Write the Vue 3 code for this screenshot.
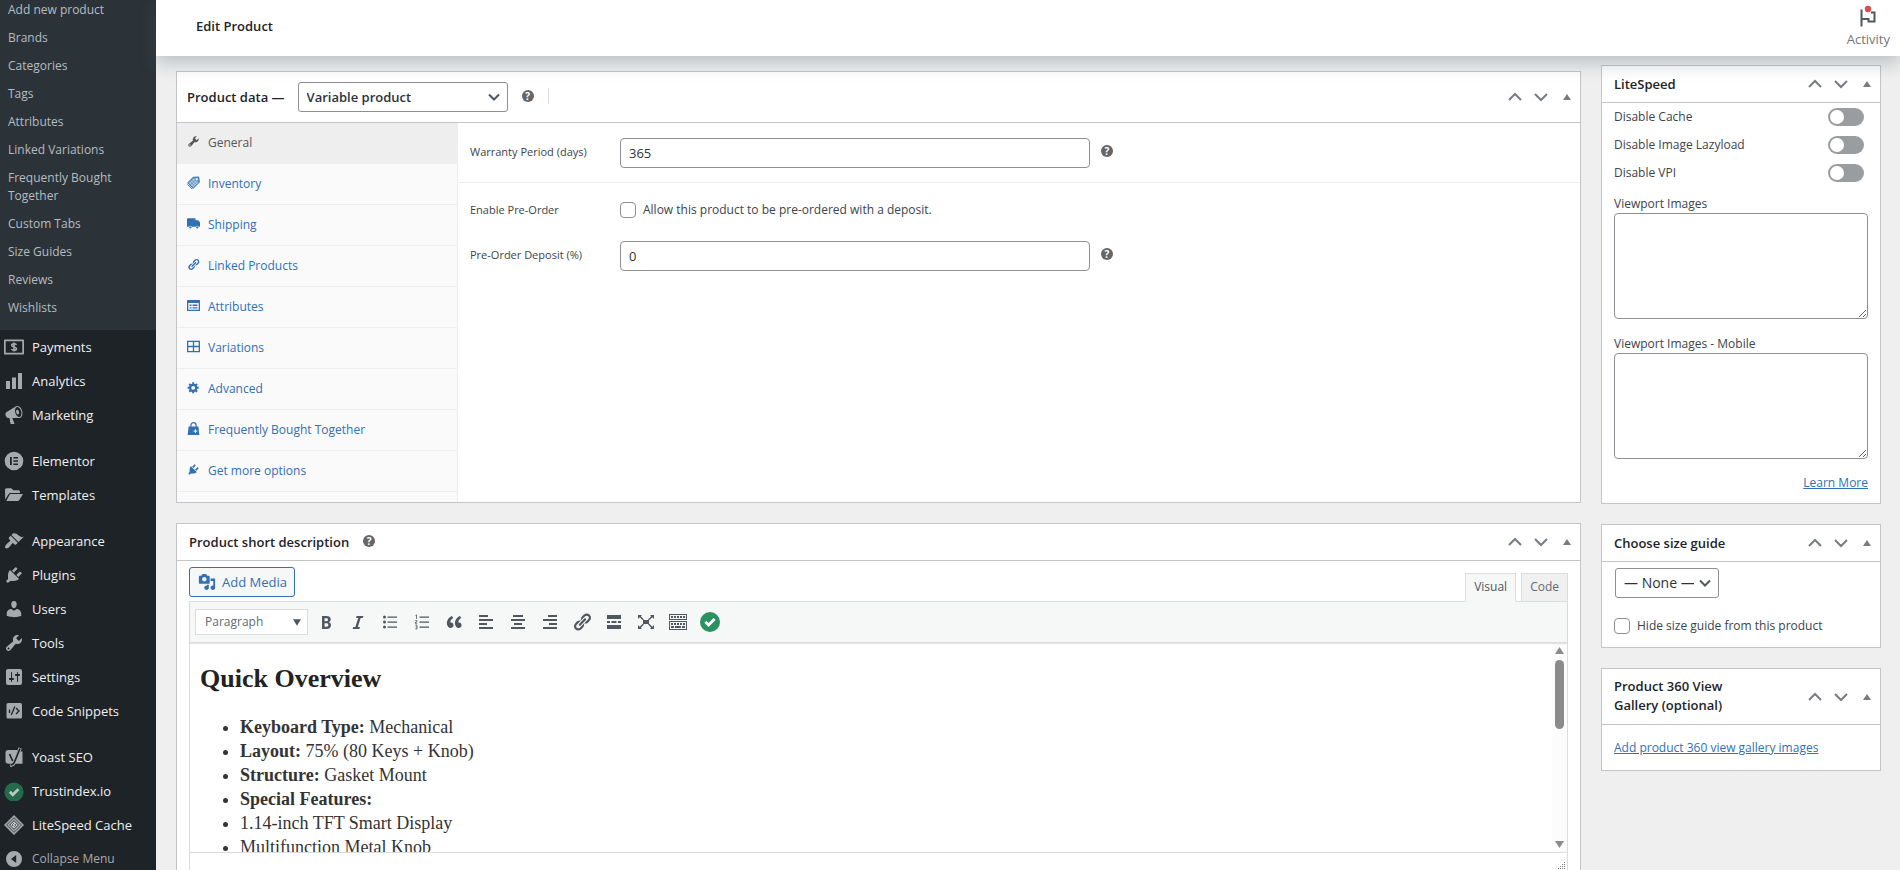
<script setup>
import { ref } from 'vue'

const icons = {
  payments: '<path fill-rule="evenodd" d="M1 2.500h18c.6 0 1 .4 1 1v13c0 .6-.4 1-1 1H1c-.6 0-1-.4-1-1v-13c0-.6.4-1 1-1zm.7 1.700v11.600h16.600V4.200z"/><path d="M12.500 7.800c-.5-.8-1.400-1-2.500-1-1.300 0-2.300.5-2.300 1.500 0 2.200 4.800 1.100 4.800 3.400 0 1-1 1.600-2.400 1.600-1.200 0-2.200-.3-2.700-1.100M10 5.500v9" fill="none" stroke="currentColor" stroke-width="1.600"/>',
  analytics: '<path d="M2 10h4v8H2zM8 6.500h4V18H8zM14 2h4v16h-4z"/>',
  marketing: '<path d="M18.150 5.940c.46 1.620.38 3.220-.02 4.480-.42 1.280-1.260 2.180-2.300 2.480-.16.060-.26.060-.4.060-.06.020-.12.020-.18.020-.06.020-.14.020-.22.020h-6.800l2.220 5.500c.02.140-.06.260-.14.340-.08.100-.24.160-.34.160H6.950c-.1 0-.26-.06-.34-.16-.08-.08-.16-.2-.14-.34l-1-5.500H4.250l-.02-.02c-.5.060-1.080-.18-1.540-.62s-.88-1.080-1.060-1.880c-.24-.8-.2-1.560-.02-2.200.18-.62.580-1.080 1.060-1.300l.02-.02 9-5.400c.1-.06.180-.1.240-.16.060-.04.140-.08.240-.12.160-.08.280-.12.500-.18 1.040-.3 2.240.1 3.220.980s1.840 2.240 2.260 3.860zm-2.580 5.980h-.02c.4-.1.740-.34 1.040-.7.580-.7.860-1.760.860-3.040 0-.64-.1-1.300-.28-1.980-.34-1.360-1.020-2.500-1.780-3.240s-1.680-1.100-2.460-.88c-.82.220-1.400.960-1.700 2-.32 1.040-.28 2.360.060 3.720.38 1.360 1 2.500 1.800 3.240.78.740 1.620 1.100 2.480.880zm-2.540-7.080c.22-.04.420-.02.620.040.380.160.760.480 1.020 1s.42 1.200.42 1.780c0 .3-.04.560-.12.800-.18.480-.44.840-.86.940-.34.100-.8-.06-1.140-.4s-.64-.86-.78-1.500c-.18-.62-.12-1.240.020-1.720s.48-.84.820-.94z"/>',
  elementor: '<path fill-rule="evenodd" d="M10 .7a9.300 9.300 0 1 0 0 18.600A9.300 9.300 0 0 0 10 .7zM6 6h1.800v8H6zm3.400 0H14v1.600H9.400zm0 3.200H14v1.600H9.400zm0 3.200H14V14H9.400z"/>',
  templates: '<path d="M1 5c0-1 .6-1.700 1.500-1.700h4.800l2 2h5.200c.8 0 1.400.6 1.400 1.400V8H6.800c-1 0-1.800.4-2.300 1.300L1.200 14.500z"/><path d="M6.800 9H19l-3.500 5.800c-.5.800-1.300 1.300-2.200 1.300H2.300l3-5.900C5.600 9.400 6.100 9 6.800 9z"/>',
  appearance: '<path d="M14.480 11.060L7.410 3.990l1.500-1.500c.5-.56 2.300-.47 3.510.320 1.210.8 1.430 1.280 2.910 2.100 1.180.640 2.450 1.260 4.450.850zm-.71.710L6.700 4.700 4.930 6.470c-.39.390-.39 1.020 0 1.410l1.060 1.060c.39.390.39 1.030 0 1.420-.6.600-1.430 1.110-2.210 1.690-.35.260-.7.530-1.010.840C1.430 14.230.4 16.080 1.400 17.070c.99 1 2.840-.03 4.180-1.360.31-.31.580-.66.850-1.020.57-.78 1.080-1.610 1.690-2.210.39-.39 1.020-.39 1.410 0l1.060 1.060c.39.390 1.020.39 1.410 0z"/>',
  plugin: '<path d="M13.110 4.360L9.870 7.600 8 5.730l3.240-3.240c.35-.34 1.050-.2 1.560.320.520.510.660 1.210.310 1.550zm-8 1.770l.91-1.120 9.010 9.010-1.190.840c-.71.710-2.630 1.160-3.820 1.160H6.140L4.900 17.260c-.59.590-1.540.590-2.120 0-.59-.58-.59-1.530 0-2.120l1.240-1.240v-3.880c0-1.130.4-3.190 1.090-3.890zm7.260 3.970l3.240-3.240c.34-.35 1.040-.21 1.550.310.520.510.660 1.210.310 1.550l-3.240 3.250z"/>',
  users: '<path d="M10 9.250c-2.270 0-2.730-3.440-2.730-3.440C7 4.020 7.820 2 9.970 2c2.160 0 2.980 2.020 2.710 3.810 0 0-.41 3.440-2.680 3.440zm0 2.570L12.720 10c2.390 0 4.520 2.330 4.520 4.530v2.490s-3.650 1.130-7.240 1.130c-3.650 0-7.240-1.130-7.240-1.130v-2.490c0-2.250 1.940-4.480 4.470-4.480z"/>',
  wrench: '<path d="M16.680 9.770c-1.340 1.340-3.300 1.670-4.950.99l-5.410 6.520c-.99.990-2.590.990-3.580 0s-.99-2.590 0-3.570l6.520-5.420c-.68-1.650-.35-3.610.99-4.950 1.280-1.280 3.120-1.620 4.720-1.060l-2.890 2.890 2.820 2.820 2.860-2.870c.53 1.580.18 3.390-1.080 4.650zM3.810 16.210c.4.390 1.040.390 1.430 0 .4-.4.4-1.040 0-1.430-.39-.4-1.030-.4-1.430 0-.39.390-.39 1.030 0 1.430z"/>',
  settings: '<path d="M18 16V4c0-1.100-.9-2-2-2H4c-1.100 0-2 .9-2 2v12c0 1.100.9 2 2 2h12c1.100 0 2-.9 2-2zM8 11h1c.55 0 1 .45 1 1s-.45 1-1 1H8v1.500c0 .28-.22.5-.5.5s-.5-.22-.5-.5V13H6c-.55 0-1-.45-1-1s.45-1 1-1h1V5.500c0-.28.22-.5.5-.5s.5.22.5.5V11zm5-2h-1c-.55 0-1-.45-1-1s.45-1 1-1h1V5.500c0-.28.22-.5.5-.5s.5.22.5.5V7h1c.55 0 1 .45 1 1s-.45 1-1 1h-1v5.500c0 .28-.22.5-.5.5s-.5-.22-.5-.5V9z"/>',
  snippets: '<rect x="2.500" y="2" width="15.500" height="15.500" rx="1.500"/><path d="M10.800 5.500l-3.500 8.500M5.500 8.500v3.500M12 7l3 3-3 3" fill="none" stroke="#1d2327" stroke-width="1.300"/>',
  yoast: '<path d="M4.500 3h9L9.500 16.800H4.500A3 3 0 0 1 1.500 13.800V6a3 3 0 0 1 3-3z"/><path d="M14.800 4.500L18.500 4.500V16.800H10z"/><path d="M5.500 7l3 7M16.200 1L10.500 15c-.8 2.200-2 3.300-4.500 3.500" fill="none" stroke="#a7aaad" stroke-width="3.400"/><path d="M5.500 7l3.200 7M16 1.500L10.500 15c-.8 1.900-1.800 2.800-4 3" fill="none" stroke="#1d2327" stroke-width="1.700"/>',
  trust: '<circle cx="10" cy="11" r="9.600" fill="#256b4b"/><path d="M5.800 10.700l3 3 5.600-5.400" fill="none" stroke="#b9c9c1" stroke-width="2.800"/>',
  litespeed: '<path d="M10 1l9 9-9 9-9-9z" fill="#64696d" stroke="#a7aaad" stroke-width="1.400"/><path d="M10 4.300l5.700 5.700-5.700 5.700L4.300 10z" fill="none" stroke="#c3c4c7"/><path d="M10 7l3 3-3 3-3-3z" fill="none" stroke="#c3c4c7"/><path d="M11 8l-2 2h2l-2 2" fill="none" stroke="#e4e5e6" stroke-width=".8"/>',
  collapse: '<path fill-rule="evenodd" d="M10 2a8 8 0 1 0 0 16 8 8 0 0 0 0-16zm2.200 4v8l-5.200-4z"/>',
  inventory: '<path d="M9.500 2L18 1.500l1 8L9.500 19 1 10.500z" fill-opacity=".7"/><path d="M1 10.500L9.500 2 18 1.500l1 8L9.500 19zM1 13l7 7" fill="none" stroke="currentColor" stroke-width="1.500"/><circle cx="15" cy="5" r="1.600" fill="#fff"/><path d="M6 7l7 7M3.500 9.500l7 7M8.500 4.500l7 7M12 4l-8 8M15 7l-8 8M17 9l-8 8" stroke="#fafafa" stroke-width=".7"/>',
  shipping: '<path d="M1 2h12v3h4.500L20 8.500V15h-2a2.500 2.500 0 0 0-4.500 0H7.500A2.500 2.500 0 0 0 3 15H0V3a1 1 0 0 1 1-1z"/><circle cx="5.200" cy="16" r="1.700"/><circle cx="15.800" cy="16" r="1.700"/>',
  link: '<path d="M17.740 2.760c1.680 1.690 1.680 4.410 0 6.100l-1.530 1.520c-1.120 1.120-2.700 1.470-4.140 1.090l2.620-2.610.76-.77.760-.76c.84-.84.84-2.200 0-3.040-.84-.85-2.200-.85-3.040 0l-.77.760-3.380 3.380c-.37-1.440-.02-3.020 1.100-4.140l1.520-1.530c1.690-1.680 4.420-1.680 6.100 0zM8.590 13.430l5.340-5.340c.42-.42.420-1.100 0-1.520-.44-.43-1.130-.39-1.530 0l-5.330 5.340c-.42.420-.42 1.100 0 1.520.44.430 1.130.390 1.520 0zm-.76 2.290l4.140-4.150c.38 1.440.030 3.020-1.090 4.140l-1.520 1.530c-1.690 1.680-4.410 1.680-6.100 0-1.680-1.680-1.680-4.420 0-6.100l1.530-1.520c1.120-1.120 2.700-1.470 4.140-1.100l-4.140 4.150c-.85.840-.85 2.200 0 3.050.84.840 2.200.840 3.040 0z"/>',
  attributes: '<path fill-rule="evenodd" d="M1 1.500h18a1 1 0 0 1 1 1v15a1 1 0 0 1-1 1H1a1 1 0 0 1-1-1v-15a1 1 0 0 1 1-1zM2 6v10.500h16V6z"/><path d="M4 8.500h3v2.300H4zM8.500 8.500H16v2.300H8.500zM4 12.500h3v2.300H4zM8.500 12.500H16v2.300H8.500z"/>',
  variations: '<path fill-rule="evenodd" d="M0 1h20v18H0zM2 3v6h7V3zM11 3v6h7V3zM2 11v6h7v-6zM11 11v6h7v-6z"/>',
  gear: '<path d="M18 12h-2.180c-.17.700-.44 1.350-.81 1.930l1.540 1.540-2.100 2.100-1.540-1.540c-.58.360-1.230.630-1.910.790V19H8v-2.180c-.68-.16-1.330-.43-1.910-.79l-1.540 1.540-2.120-2.120 1.540-1.540c-.36-.58-.63-1.230-.79-1.910H1V9.030h2.170c.16-.7.440-1.350.8-1.940L2.430 5.550l2.100-2.100 1.540 1.540c.58-.37 1.240-.64 1.930-.81V2h3v2.180c.68.160 1.330.430 1.910.790l1.540-1.540 2.120 2.120-1.540 1.540c.36.590.640 1.240.8 1.940H18V12zm-8.500 1.500c1.660 0 3-1.340 3-3s-1.340-3-3-3-3 1.340-3 3 1.340 3 3 3z"/>',
  bag: '<path d="M2.500 7h15L19 20H1z"/><path d="M6 8V5a4 4 0 0 1 8 0v3" fill="none" stroke="currentColor" stroke-width="1.800"/><path d="M13 11v6M10 14h6" stroke="#fff" stroke-width="1.500"/>',
  media: '<path d="M13 11V4c0-.55-.45-1-1-1h-1.670L9 1H5L3.670 3H2c-.55 0-1 .45-1 1v7c0 .55.45 1 1 1h10c.55 0 1-.45 1-1zM7 4.500c1.380 0 2.500 1.120 2.500 2.500S8.380 9.500 7 9.500 4.500 8.380 4.500 7 5.620 4.500 7 4.500zM14 6h5v10.500c0 1.380-1.120 2.500-2.500 2.500S14 17.880 14 16.500s1.120-2.500 2.500-2.500c.17 0 .34.020.5.050V9h-3V6zm-4 8.050V13h2v3.500c0 1.380-1.120 2.500-2.500 2.500S7 17.880 7 16.500 8.120 14 9.500 14c.17 0 .34.020.5.050z"/>',
  bold: '<path d="M6 4v13h4.540c1.370 0 2.460-.33 3.260-1 .8-.66 1.200-1.580 1.200-2.770 0-.84-.17-1.510-.51-2.010s-.9-.85-1.670-1.030v-.09c.57-.1 1.020-.4 1.360-.9s.51-1.130.510-1.910c0-1.140-.39-1.980-1.170-2.500C12.750 4.260 11.500 4 9.780 4H6zm2.570 5.150V6.260h1.360c.73 0 1.270.110 1.610.320.340.220.510.580.510 1.070 0 .54-.16.920-.47 1.150s-.82.350-1.510.350h-1.500zm0 2.190h1.600c1.440 0 2.160.530 2.160 1.610 0 .6-.17 1.050-.51 1.340s-.86.430-1.570.430H8.570v-3.380z"/>',
  italic: '<path d="M14.780 6h-2.130l-2.800 9h2.120l-.62 2H4.600l.62-2h2.140l2.800-9H8.030l.62-2h6.750z"/>',
  ul: '<circle cx="4.500" cy="5" r="1.500"/><circle cx="4.500" cy="10" r="1.500"/><circle cx="4.500" cy="15" r="1.500"/><path d="M7.500 4.400H17v1.400H7.500zM7.500 9.400H17v1.400H7.500zM7.500 14.400H17v1.400H7.500z"/>',
  ol: '<path d="M7.500 4.400H17v1.400H7.500zM7.500 9.400H17v1.400H7.500zM7.500 14.400H17v1.400H7.500z"/><path d="M3.500 3.500l1-.6V7M3.300 8.500h1.600v1.600H3.500v1.600h1.700M3.300 13.200h1.700v3.800H3.300M3.700 15.100H5" fill="none" stroke="currentColor" stroke-width=".8"/>',
  quote: '<path d="M9.490 13.220c0-.74-.2-1.380-.61-1.900-.62-.78-1.830-.88-2.530-.72-.29-1.650 1.110-3.750 2.920-4.650L7.880 4c-2.730 1.300-5.420 4.280-4.960 8.050C3.210 14.430 4.590 16 6.540 16c.85 0 1.560-.25 2.120-.75s.83-1.180.83-2.030zm8.050 0c0-.74-.2-1.380-.61-1.900-.63-.78-1.830-.88-2.530-.72-.29-1.650 1.110-3.750 2.920-4.650L15.930 4c-2.730 1.300-5.410 4.280-4.950 8.050.29 2.380 1.660 3.950 3.610 3.950.85 0 1.560-.25 2.120-.75s.83-1.180.83-2.030z"/>',
  left: '<path d="M3 3h9v2H3zM3 7h14v2H3zM3 11h8v2H3zM3 15h14v2H3z"/>',
  center: '<path d="M5 3h10v2H5zM3 7h14v2H3zM6 11h8v2H6zM3 15h14v2H3z"/>',
  right: '<path d="M8 3h9v2H8zM3 7h14v2H3zM9 11h8v2H9zM3 15h14v2H3z"/>',
  more: '<path d="M3 3h14v4H3zM3 13h14v4H3zM3 9h3v2H3zM7.500 9h5v2h-5zM14 9h3v2h-3z"/>',
  full: '<path d="M7 8h6v4H7z"/><path d="M2 3h4L4.800 4.200 8 7.400 6.800 8.200 3.700 5.300 2 7zM18 3v4l-1.700-1.700-3.100 2.900L12 7.400l3.200-3.200L14 3zM2 17v-4l1.700 1.700 3.100-2.900L8 12.600l-3.200 3.200L6 17zM18 17h-4l1.200-1.200-3.200-3.200 1.200-.8 3.100 2.900L18 13z"/>',
  kitchen: '<path fill-rule="evenodd" d="M1 2h18v6H1zM2 3v4h16V3zM1 9h18v9H1zM2 10v7h16v-7z"/><path d="M3 5h14M3 12h14" stroke="currentColor" stroke-width="2" stroke-dasharray="2 1"/><path d="M3 15h3M7 15h6M14 15h3" stroke="currentColor" stroke-width="2"/>',
  check: '<circle cx="10" cy="10" r="10" fill="#2a9161"/><path d="M5.400 9.800l3.200 3.200 6-6" fill="none" stroke="#fff" stroke-width="2.800"/>'
}

const submenu = ['Add new product', 'Brands', 'Categories', 'Tags', 'Attributes', 'Linked Variations',
  'Frequently Bought Together', 'Custom Tabs', 'Size Guides', 'Reviews', 'Wishlists']

const menuGroups = [
  [['payments', 'Payments'], ['analytics', 'Analytics'], ['marketing', 'Marketing']],
  [['elementor', 'Elementor'], ['templates', 'Templates']],
  [['appearance', 'Appearance'], ['plugin', 'Plugins'], ['users', 'Users'], ['wrench', 'Tools'],
    ['settings', 'Settings'], ['snippets', 'Code Snippets']],
  [['yoast', 'Yoast SEO'], ['trust', 'Trustindex.io'], ['litespeed', 'LiteSpeed Cache']]
]

const tabs = [['wrench', 'General'], ['inventory', 'Inventory'], ['shipping', 'Shipping'],
  ['link', 'Linked Products'], ['attributes', 'Attributes'], ['variations', 'Variations'],
  ['gear', 'Advanced'], ['bag', 'Frequently Bought Together'], ['plugin', 'Get more options']]
const activeTab = ref('General')

const tools = [['bold', 'Bold'], ['italic', 'Italic'], ['ul', 'Bulleted list'], ['ol', 'Numbered list'],
  ['quote', 'Blockquote'], ['left', 'Align left'], ['center', 'Align center'], ['right', 'Align right'],
  ['link', 'Insert link'], ['more', 'Read more'], ['full', 'Fullscreen'], ['kitchen', 'Toolbar toggle'],
  ['check', 'Trustindex']]

const toggles = ref([
  { id: 'cache', label: 'Disable Cache', on: false },
  { id: 'lazy', label: 'Disable Image Lazyload', on: false },
  { id: 'vpi', label: 'Disable VPI', on: false }
])

const warranty = ref('365')
const deposit = ref('0')
const preorder = ref(false)
const hideGuide = ref(false)
const viewport = ref('')
const viewportMobile = ref('')
</script>

<template>
  <div class="shell">
    <nav class="side">
      <ul class="submenu">
        <li v-for="s in submenu" :key="s"><a href="#">{{ s }}</a></li>
      </ul>
      <ul v-for="(g, i) in menuGroups" :key="i" class="menu">
        <li v-for="m in g" :key="m[1]">
          <a href="#"><svg viewBox="0 0 20 20" v-html="icons[m[0]]"></svg><span>{{ m[1] }}</span></a>
        </li>
        <li v-if="i === menuGroups.length - 1">
          <button type="button" class="collapse"><svg viewBox="0 0 20 20" v-html="icons.collapse"></svg><span>Collapse Menu</span></button>
        </li>
      </ul>
    </nav>

    <div class="page">
      <header class="top">
        <h1>Edit Product</h1>
        <button type="button" class="activity">
          <svg viewBox="0 0 20 22" aria-hidden="true">
            <path d="M3.500 4.500v17M4 14h6.500v2.500h6V7.500h-3.500" fill="none" stroke="#50575e" stroke-width="2" />
            <circle cx="10" cy="4" r="3.200" fill="#d94f4f" />
          </svg>
          <span>Activity</span>
        </button>
      </header>

      <div class="body">
        <main class="main">
          <section class="box">
            <div class="head data-head">
              <h2><label for="ptype">Product data —</label></h2>
              <span class="pick type">
                <select id="ptype"><option>Variable product</option></select>
                <svg viewBox="0 0 12 12" aria-hidden="true"><path d="M1 3.500l5 5 5-5" /></svg>
              </span>
              <span class="help">?</span>
              <i class="divider"></i>
              <div class="handles">
                <button type="button" aria-label="Move up"><svg viewBox="0 0 16 16"><path d="M2 11l6-6 6 6" /></svg></button>
                <button type="button" aria-label="Move down"><svg viewBox="0 0 16 16"><path d="M2 5l6 6 6-6" /></svg></button>
                <button type="button" aria-label="Toggle panel"><svg viewBox="0 0 16 16"><path class="tri" d="M4 11l4-6 4 6z" /></svg></button>
              </div>
            </div>
            <div class="data">
              <ul class="tabs">
                <li v-for="t in tabs" :key="t[1]">
                  <a href="#" :class="{ on: activeTab === t[1] }" @click.prevent="activeTab = t[1]">
                    <svg viewBox="0 0 20 20" v-html="icons[t[0]]"></svg><span>{{ t[1] }}</span>
                  </a>
                </li>
              </ul>
              <div class="fields">
                <div class="group">
                  <div class="field">
                    <label for="warranty">Warranty Period (days)</label>
                    <input id="warranty" v-model="warranty" type="text">
                    <span class="help">?</span>
                  </div>
                </div>
                <div class="group">
                  <div class="field check-row">
                    <label for="preorder">Enable Pre-Order</label>
                    <span class="inline"><input id="preorder" v-model="preorder" type="checkbox"><span>Allow this product to be pre-ordered with a deposit.</span></span>
                  </div>
                  <div class="field">
                    <label for="deposit">Pre-Order Deposit (%)</label>
                    <input id="deposit" v-model="deposit" type="text">
                    <span class="help">?</span>
                  </div>
                </div>
              </div>
            </div>
          </section>

          <section class="box">
            <div class="head">
              <h2>Product short description</h2>
              <span class="help">?</span>
              <div class="handles">
                <button type="button" aria-label="Move up"><svg viewBox="0 0 16 16"><path d="M2 11l6-6 6 6" /></svg></button>
                <button type="button" aria-label="Move down"><svg viewBox="0 0 16 16"><path d="M2 5l6 6 6-6" /></svg></button>
                <button type="button" aria-label="Toggle panel"><svg viewBox="0 0 16 16"><path class="tri" d="M4 11l4-6 4 6z" /></svg></button>
              </div>
            </div>
            <div class="editor">
              <div class="editor-top">
                <button type="button" class="add-media"><svg viewBox="0 0 20 20" v-html="icons.media"></svg>Add Media</button>
                <div class="modes">
                  <button type="button" class="current">Visual</button>
                  <button type="button">Code</button>
                </div>
              </div>
              <div class="frame">
                <div class="toolbar">
                  <button type="button" class="format"><span>Paragraph</span><svg viewBox="0 0 10 8"><path d="M0 0h10L5 8z" /></svg></button>
                  <button v-for="t in tools" :key="t[0]" type="button" class="tool" :aria-label="t[1]">
                    <svg viewBox="0 0 20 20" v-html="icons[t[0]]"></svg>
                  </button>
                </div>
                <div class="canvas">
                  <article class="copy">
                    <h2>Quick Overview</h2>
                    <ul>
                      <li><strong>Keyboard Type:</strong> Mechanical</li>
                      <li><strong>Layout:</strong> 75% (80 Keys + Knob)</li>
                      <li><strong>Structure:</strong> Gasket Mount</li>
                      <li><strong>Special Features:</strong></li>
                      <li>1.14-inch TFT Smart Display</li>
                      <li>Multifunction Metal Knob</li>
                    </ul>
                  </article>
                  <div class="scroll">
                    <svg viewBox="0 0 9 7"><path d="M4.500 0L9 7H0z" /></svg>
                    <i class="thumb"></i>
                    <svg viewBox="0 0 9 7"><path d="M0 0h9L4.500 7z" /></svg>
                  </div>
                </div>
                <div class="status">
                  <svg viewBox="0 0 10 10"><path d="M1 9.500h9M3 7.500h7M5 5.500h5M7 3.500h3M9 1.500h1" /></svg>
                </div>
              </div>
            </div>
          </section>
        </main>

        <aside class="aside">
          <section class="box">
            <div class="head">
              <h2>LiteSpeed</h2>
              <div class="handles">
                <button type="button" aria-label="Move up"><svg viewBox="0 0 16 16"><path d="M2 11l6-6 6 6" /></svg></button>
                <button type="button" aria-label="Move down"><svg viewBox="0 0 16 16"><path d="M2 5l6 6 6-6" /></svg></button>
                <button type="button" aria-label="Toggle panel"><svg viewBox="0 0 16 16"><path class="tri" d="M4 11l4-6 4 6z" /></svg></button>
              </div>
            </div>
            <div class="ls">
              <div v-for="t in toggles" :key="t.id" class="switch-row">
                <label :for="t.id">{{ t.label }}</label>
                <input :id="t.id" v-model="t.on" type="checkbox" class="switch">
              </div>
              <div class="area">
                <label for="vp">Viewport Images</label>
                <textarea id="vp" v-model="viewport"></textarea>
              </div>
              <div class="area">
                <label for="vpm">Viewport Images - Mobile</label>
                <textarea id="vpm" v-model="viewportMobile"></textarea>
              </div>
              <div class="learn"><a href="#">Learn More</a></div>
            </div>
          </section>

          <section class="box">
            <div class="head">
              <h2>Choose size guide</h2>
              <div class="handles">
                <button type="button" aria-label="Move up"><svg viewBox="0 0 16 16"><path d="M2 11l6-6 6 6" /></svg></button>
                <button type="button" aria-label="Move down"><svg viewBox="0 0 16 16"><path d="M2 5l6 6 6-6" /></svg></button>
                <button type="button" aria-label="Toggle panel"><svg viewBox="0 0 16 16"><path class="tri" d="M4 11l4-6 4 6z" /></svg></button>
              </div>
            </div>
            <div class="guide">
              <span class="pick small">
                <select aria-label="Size guide"><option>— None —</option></select>
                <svg viewBox="0 0 12 12" aria-hidden="true"><path d="M1 3.500l5 5 5-5" /></svg>
              </span>
              <label class="inline hide"><input v-model="hideGuide" type="checkbox"><span>Hide size guide from this product</span></label>
            </div>
          </section>

          <section class="box">
            <div class="head">
              <h2 class="two">Product 360 View Gallery (optional)</h2>
              <div class="handles">
                <button type="button" aria-label="Move up"><svg viewBox="0 0 16 16"><path d="M2 11l6-6 6 6" /></svg></button>
                <button type="button" aria-label="Move down"><svg viewBox="0 0 16 16"><path d="M2 5l6 6 6-6" /></svg></button>
                <button type="button" aria-label="Toggle panel"><svg viewBox="0 0 16 16"><path class="tri" d="M4 11l4-6 4 6z" /></svg></button>
              </div>
            </div>
            <div class="gallery"><a href="#">Add product 360 view gallery images</a></div>
          </section>
        </aside>
      </div>
    </div>
  </div>
</template>

<style>
body { margin: 0; background: #efefef; }
</style>

<style scoped>
.shell { display: flex; height: 100vh; overflow: hidden; background: #efefef; color: #3c434a; font: 12px/18px "Open Sans", "Noto Sans", sans-serif; }
.shell *, .shell *::before { box-sizing: border-box; }
ul { list-style: none; margin: 0; padding: 0; }
h1, h2 { margin: 0; font-size: 13px; font-weight: 600; color: #1d2327; }
button, input, select, textarea { font: inherit; color: inherit; margin: 0; }
button { background: none; border: 0; padding: 0; cursor: pointer; }
svg { fill: currentColor; flex: none; display: block; }
a { color: #3070b3; }

.side { width: 156px; flex: none; background: #1d2327; }
.submenu { margin-top: -4px; padding-bottom: 8px; background: #2c3338; }
.submenu a { display: block; padding: 5px 8px; color: #b5bcc2; text-decoration: none; }
.menu + .menu { margin-top: 12px; }
.menu a, .collapse { display: flex; align-items: center; gap: 8px; height: 34px; padding: 0 4px; font-size: 13px; color: #f0f0f1; text-decoration: none; white-space: nowrap; }
.menu svg { width: 20px; height: 20px; color: #a7aaad; }
.collapse { font-size: 12px; color: #a7aaad; }

.page { flex: 1; min-width: 0; display: flex; flex-direction: column; }
.top { position: relative; z-index: 2; flex: none; height: 56px; padding: 0 10px 0 40px; display: flex; justify-content: space-between; background: #fff; box-shadow: 0 8px 16px rgba(85, 93, 102, .3); }
.top h1 { align-self: center; padding-bottom: 4px; }
.activity { display: flex; flex-direction: column; align-items: center; gap: 3px; padding-top: 5px; font-size: 13px; color: #757575; }
.activity svg { width: 20px; height: 22px; }

.body { flex: 1; min-height: 0; display: flex; gap: 20px; padding: 9px 19px 0 20px; }
.main { flex: 1; min-width: 0; display: flex; flex-direction: column; gap: 20px; padding-top: 6px; }
.aside { width: 280px; flex: none; display: flex; flex-direction: column; gap: 20px; }
.box { background: #fff; border: 1px solid #c3c4c7; }
.head { display: flex; align-items: center; min-height: 37px; padding: 0 0 0 12px; border-bottom: 1px solid #c3c4c7; }
.data-head { min-height: 51px; padding-left: 10px; }
.handles { margin-left: auto; display: flex; color: #787c82; }
.handles button { width: 26px; height: 26px; display: grid; place-items: center; }
.handles svg { width: 16px; height: 16px; }
.handles path { fill: none; stroke: currentColor; stroke-width: 2; }
.handles .tri { fill: currentColor; stroke: none; }
.help { flex: none; width: 12px; height: 12px; border-radius: 50%; background: #666; color: #fff; font-size: 10px; font-weight: 700; line-height: 12px; text-align: center; }
.head .help { margin: 0 0 3px 14px; }
.divider { width: 1px; height: 16px; margin: 0 0 3px 14px; background: #dcdcde; }

.pick { position: relative; display: block; }
.pick select { appearance: none; width: 100%; height: 30px; padding: 0 24px 0 8px; border: 1px solid #8c8f94; border-radius: 3px; background: #fff; color: #2c3338; font-size: 14px; }
.pick svg { position: absolute; right: 8px; top: 9px; width: 12px; height: 12px; pointer-events: none; }
.pick path { fill: none; stroke: #50575e; stroke-width: 2; }
.type { width: 210px; margin-left: 13px; }
.type select { font-weight: 600; font-size: 13px; }

.data { display: flex; }
.tabs { width: 281px; flex: none; padding-bottom: 10px; background: #fafafa; border-right: 1px solid #eee; }
.tabs a { display: flex; gap: 8px; height: 41px; padding: 10px 10px 0; border-bottom: 1px solid #eee; text-decoration: none; line-height: 20px; }
.tabs a.on { background: #eee; color: #555; }
.tabs svg { width: 13px; height: 13px; margin-top: 2px; }
.fields { flex: 1; min-width: 0; }
.group { display: grid; gap: 23px; padding: 19px 20px 14px 12px; }
.group:first-child { padding-top: 15px; border-bottom: 1px solid #eee; }
.field { display: flex; align-items: center; }
.field > label { width: 150px; flex: none; padding-bottom: 3px; font-size: 11px; }
.field input[type=text] { width: calc(50% - 75px); height: 30px; padding: 0 8px; border: 1px solid #8c8f94; border-radius: 4px; background: #fff; color: #2c3338; font-size: 13px; }
.field .help { margin: 0 0 4px 11px; }
.check-row { height: 16px; }
.check-row > label { padding: 0; }
.inline { display: flex; align-items: center; gap: 7px; }
input[type=checkbox]:not(.switch) { appearance: none; width: 16px; height: 16px; border: 1px solid #8c8f94; border-radius: 4px; background: #fff; }

.editor { padding: 6px 12px 12px; }
.editor-top { display: flex; justify-content: space-between; align-items: flex-start; height: 34px; }
.add-media { display: flex; align-items: center; gap: 6px; height: 30px; padding: 0 7px 0 8px; border: 1px solid #3070b3; border-radius: 3px; background: #f6f7f7; color: #3070b3; font-size: 13px; }
.add-media svg { width: 18px; height: 18px; }
.modes { display: flex; gap: 5px; align-self: flex-end; }
.modes button { position: relative; height: 29px; margin-bottom: -1px; padding: 0 8px 2px; border: 1px solid #dcdcde; background: #f0f0f1; color: #646970; }
.modes .current { border-bottom-color: #f6f7f7; background: #f6f7f7; color: #50575e; z-index: 1; }
.frame { border: 1px solid #dcdcde; }
.toolbar { position: relative; display: flex; align-items: center; height: 41px; padding: 0 5px; background: #f6f7f7; border-bottom: 1px solid #dcdcde; box-shadow: 0 1px 1px rgba(0, 0, 0, .1); color: #50575e; }
.format { display: flex; align-items: center; justify-content: space-between; width: 113px; height: 26px; margin-right: 7px; padding: 0 6px 0 9px; border: 1px solid #dcdcde; background: #fff; color: #646970; }
.format svg { width: 8px; height: 7px; color: #50575e; }
.tool { width: 22px; height: 22px; margin-right: 10px; display: grid; place-items: center; }
.tool svg { width: 20px; height: 20px; }
.canvas { display: flex; height: 209px; overflow: hidden; }
.copy { flex: 1; padding: 20px 10px; font: 18px/24px "Liberation Serif", serif; color: #333; }
.copy h2 { font-size: 26px; line-height: 32px; color: #222; }
.copy ul { list-style: disc; margin-top: 20px; padding-left: 40px; }
.scroll { width: 15px; flex: none; display: flex; flex-direction: column; align-items: center; padding: 4px 0; background: #fcfcfc; color: #8b8b8b; }
.scroll svg { width: 9px; height: 7px; }
.thumb { width: 9px; height: 69px; margin: 6px 0 auto; border-radius: 5px; background: #8b8b8b; }
.status { height: 20px; display: flex; justify-content: flex-end; align-items: flex-end; padding: 0 2px 1px; border-top: 1px solid #dcdcde; }
.status svg { width: 10px; height: 10px; }
.status path { stroke: #787c82; stroke-width: 1; stroke-dasharray: 1 1; }

.ls { padding: 0 12px 11px; }
.switch-row { display: flex; justify-content: space-between; align-items: center; height: 28px; padding-right: 4px; }
.switch { appearance: none; display: block; width: 36px; height: 18px; padding: 2px; border-radius: 9px; background: #9a9d9f; }
.switch::before { content: ""; display: block; width: 14px; height: 14px; border-radius: 50%; background: #fff; }
.area { margin-top: 16px; }
.switch-row + .area { margin-top: 8px; }
.area label { display: block; }
textarea { display: block; width: 100%; height: 106px; border: 1px solid #8c8f94; border-radius: 4px; background: #fff; resize: vertical; }
.learn { margin-top: 15px; text-align: right; }
.guide { padding: 6px 13px 12px; }
.small { width: 104px; }
.hide { margin: 19px 0 0 -1px; }
.two { width: 150px; padding: 8px 0 9px; line-height: 19px; }
.gallery { padding: 14px 12px 13px; }
</style>
